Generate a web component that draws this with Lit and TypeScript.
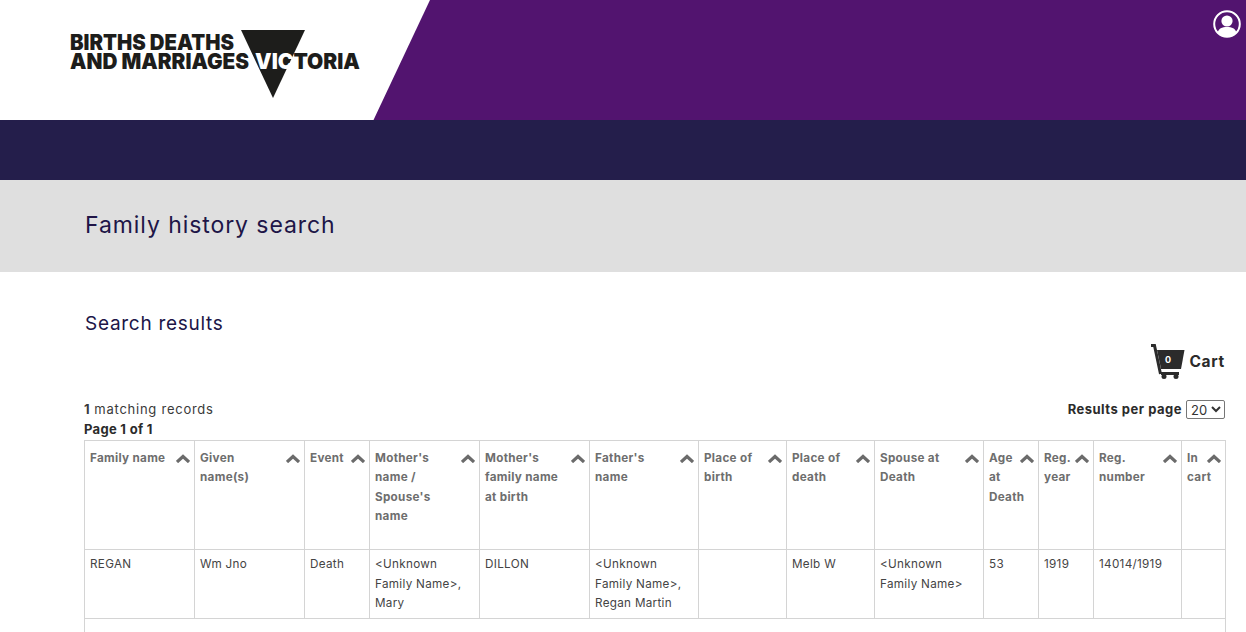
import { LitElement, html, css, svg } from 'lit'
import { customElement } from 'lit/decorators.js'

const COLUMNS = [
  { label: "Family name", width: 110 },
  { label: 'Given name(s)', width: 110 },
  { label: 'Event', width: 65 },
  { label: "Mother's name / Spouse's name", width: 110 },
  { label: "Mother's family name at birth", width: 110 },
  { label: "Father's name", width: 109 },
  { label: 'Place of birth', width: 88 },
  { label: 'Place of death', width: 88 },
  { label: 'Spouse at Death', width: 109 },
  { label: 'Age at Death', width: 55 },
  { label: 'Reg. year', width: 55 },
  { label: 'Reg. number', width: 88 },
  { label: 'In cart', width: 44 },
]

const ROW = [
  'REGAN',
  'Wm Jno',
  'Death',
  '<Unknown Family Name>, Mary',
  'DILLON',
  '<Unknown Family Name>, Regan Martin',
  '',
  'Melb W',
  '<Unknown Family Name>',
  '53',
  '1919',
  '14014/1919',
  '',
]

const chevron = svg`<path d="M1 8 7 2.500 13 8" fill="none" stroke="#6b6b6b" stroke-width="3.200"/>`

@customElement('app-root')
class App extends LitElement {
  static styles = css`
    :host {
      display: block;
      height: 632px;
      overflow: hidden;
      background: #fff;
      font-family: Inter, 'Noto Sans', sans-serif;
      color: #2b2b2b;
    }
    .top {
      height: 120px;
      background: #52146f;
      display: flex;
      justify-content: flex-end;
      position: relative;
    }
    .wedge {
      position: absolute;
      left: 0;
      top: 0;
      width: 430px;
      height: 120px;
      background: #fff;
      clip-path: polygon(0 0, 430px 0, 373.500px 120px, 0 120px);
    }
    .logo {
      position: absolute;
      left: 0;
      top: 0;
    }
    .logo text {
      font-family: Inter, sans-serif;
      font-weight: 900;
      font-size: 21.500px;
      fill: #1d1d1b;
    }
    .logo .white {
      fill: #fff;
    }
    .user {
      margin: 9px 5px 0 0;
      width: 28px;
      height: 30px;
    }
    .nav {
      height: 60px;
      background: #241e4b;
    }
    .band {
      height: 90px;
      padding: 0 0 2px 85px;
      background: #dfdfdf;
      display: flex;
      align-items: center;
    }
    h1 {
      margin: 0;
      font-size: 23px;
      font-weight: 400;
      color: #201547;
      letter-spacing: 0.92px;
    }
    .content {
      padding: 40px 21px 0 84px;
    }
    h2 {
      margin: 0 0 0 1px;
      font-size: 19px;
      line-height: 24px;
      font-weight: 400;
      color: #201547;
      letter-spacing: 0.72px;
    }
    .cart-row {
      display: flex;
      justify-content: flex-end;
      align-items: center;
      gap: 3px;
      height: 36px;
      margin-top: 8px;
    }
    .cart-row span {
      font-size: 15.500px;
      font-weight: 700;
      color: #2b2b2b;
      letter-spacing: 0.7px;
      margin-bottom: 2px;
    }
    .meta {
      display: flex;
      justify-content: space-between;
      align-items: flex-start;
      margin-top: 20px;
      height: 40px;
      font-size: 13px;
      line-height: 19.500px;
    }
    .meta b {
      font-weight: 700;
      letter-spacing: 0.3px;
    }
    .meta .count {
      display: block;
      color: #3a3a3a;
      letter-spacing: 0.75px;
    }
    .per-page {
      display: flex;
      align-items: center;
      gap: 4px;
      font-weight: 700;
      letter-spacing: 0.5px;
    }
    select {
      width: 39px;
      height: 19px;
      font-family: inherit;
      font-size: 13px;
      padding: 0;
      background: #fff;
      color: #333;
      border: 1px solid #767676;
      border-radius: 2px;
    }
    table {
      border-collapse: collapse;
      table-layout: fixed;
      width: 1141px;
      font-size: 11.700px;
      line-height: 19.500px;
    }
    th,
    td {
      border: 1px solid #d4d4d4;
      vertical-align: top;
      text-align: left;
      padding: 7.500px 4px 3.500px 5px;
      overflow: hidden;
      letter-spacing: 0.3px;
    }
    th {
      height: 97px;
      color: #6e6e6e;
      font-weight: 700;
    }
    td {
      color: #444;
      font-weight: 400;
      height: 59.500px;
      padding-top: 5px;
    }
    .head {
      display: flex;
      justify-content: space-between;
      gap: 6px;
    }
    .head span {
      flex: 1 1 0;
      min-width: 0;
    }
    .head svg {
      flex: none;
      margin-top: 5px;
    }
    .rest td {
      height: 60px;
    }
  `

  render() {
    return html`
      <div class="top">
        <div class="wedge"></div>
        <svg class="logo" width="430" height="120" viewBox="0 0 430 120">
          <path d="M241 30H305L273 98Z" fill="#1d1d1b" />
          <text x="70" y="50" textLength="164" lengthAdjust="spacingAndGlyphs">BIRTHS DEATHS</text>
          <text x="70" y="69" textLength="179" lengthAdjust="spacingAndGlyphs">AND MARRIAGES</text>
          <text x="255" y="69" textLength="105" lengthAdjust="spacingAndGlyphs"><tspan class="white">VIC</tspan>TORIA</text>
        </svg>
        <svg class="user" viewBox="0 0 28 30">
          <circle cx="14" cy="15" r="12.800" fill="none" stroke="#fff" stroke-width="2" />
          <circle cx="14" cy="12" r="5.600" fill="#fff" />
          <path d="M4.500 24C5.500 19.500 9 18 14 18S22.500 19.500 23.500 24C21 26.500 17.500 27.500 14 27.500S7 26.500 4.500 24Z" fill="#fff" />
        </svg>
      </div>
      <div class="nav"></div>
      <div class="band"><h1>Family history search</h1></div>
      <div class="content">
        <h2>Search results</h2>
        <div class="cart-row">
          <svg width="36" height="36" viewBox="0 0 36 36">
            <path d="M1 1.500H4.500L10.500 30" fill="none" stroke="#2b2b2b" stroke-width="3" />
            <path d="M7 6H34.500L31 25H11Z" fill="#2b2b2b" />
            <path d="M11 28H29V31H11Z" fill="#2b2b2b" />
            <circle cx="14" cy="32.500" r="2.500" fill="#2b2b2b" />
            <circle cx="26" cy="32.500" r="2.500" fill="#2b2b2b" />
            <text x="15" y="18.500" font-size="9" font-weight="700" fill="#fff">0</text>
          </svg>
          <span>Cart</span>
        </div>
        <div class="meta">
          <div>
            <span class="count"><b>1</b> matching records</span>
            <b>Page 1 of 1</b>
          </div>
          <label class="per-page">
            Results per page
            <select><option>20</option></select>
          </label>
        </div>
        <table>
          <colgroup>
            ${COLUMNS.map((c) => html`<col style="width:${c.width}px" />`)}
          </colgroup>
          <thead>
            <tr>
              ${COLUMNS.map(
                (c) => html`<th>
                  <div class="head">
                    <span>${c.label}</span>
                    <svg width="14" height="9" viewBox="0 0 14 9">${chevron}</svg>
                  </div>
                </th>`,
              )}
            </tr>
          </thead>
          <tbody>
            <tr>
              ${ROW.map((v) => html`<td>${v}</td>`)}
            </tr>
            <tr class="rest"><td colspan="13"></td></tr>
          </tbody>
        </table>
      </div>
    `
  }
}
export default App
